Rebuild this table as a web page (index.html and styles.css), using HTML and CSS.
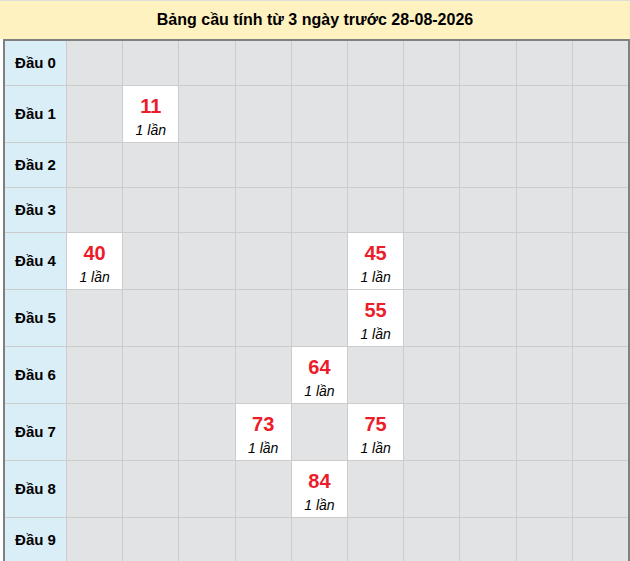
FILE: index.html
```html
<!DOCTYPE html>
<html lang="vi">
<head>
<meta charset="utf-8">
<title>Bảng cầu</title>
<link rel="stylesheet" href="styles.css">
</head>
<body>
<div class="title">Bảng cầu tính từ 3 ngày trước 28-08-2026</div>
<div class="board">
  <div class="head">Đầu 0</div><div class="c"></div><div class="c"></div><div class="c"></div><div class="c"></div><div class="c"></div><div class="c"></div><div class="c"></div><div class="c"></div><div class="c"></div><div class="c"></div>
  <div class="head">Đầu 1</div><div class="c"></div><div class="c hit"><b>11</b><i>1 lần</i></div><div class="c"></div><div class="c"></div><div class="c"></div><div class="c"></div><div class="c"></div><div class="c"></div><div class="c"></div><div class="c"></div>
  <div class="head">Đầu 2</div><div class="c"></div><div class="c"></div><div class="c"></div><div class="c"></div><div class="c"></div><div class="c"></div><div class="c"></div><div class="c"></div><div class="c"></div><div class="c"></div>
  <div class="head">Đầu 3</div><div class="c"></div><div class="c"></div><div class="c"></div><div class="c"></div><div class="c"></div><div class="c"></div><div class="c"></div><div class="c"></div><div class="c"></div><div class="c"></div>
  <div class="head">Đầu 4</div><div class="c hit"><b>40</b><i>1 lần</i></div><div class="c"></div><div class="c"></div><div class="c"></div><div class="c"></div><div class="c hit"><b>45</b><i>1 lần</i></div><div class="c"></div><div class="c"></div><div class="c"></div><div class="c"></div>
  <div class="head">Đầu 5</div><div class="c"></div><div class="c"></div><div class="c"></div><div class="c"></div><div class="c"></div><div class="c hit"><b>55</b><i>1 lần</i></div><div class="c"></div><div class="c"></div><div class="c"></div><div class="c"></div>
  <div class="head">Đầu 6</div><div class="c"></div><div class="c"></div><div class="c"></div><div class="c"></div><div class="c hit"><b>64</b><i>1 lần</i></div><div class="c"></div><div class="c"></div><div class="c"></div><div class="c"></div><div class="c"></div>
  <div class="head">Đầu 7</div><div class="c"></div><div class="c"></div><div class="c"></div><div class="c hit"><b>73</b><i>1 lần</i></div><div class="c"></div><div class="c hit"><b>75</b><i>1 lần</i></div><div class="c"></div><div class="c"></div><div class="c"></div><div class="c"></div>
  <div class="head">Đầu 8</div><div class="c"></div><div class="c"></div><div class="c"></div><div class="c"></div><div class="c hit"><b>84</b><i>1 lần</i></div><div class="c"></div><div class="c"></div><div class="c"></div><div class="c"></div><div class="c"></div>
  <div class="head">Đầu 9</div><div class="c"></div><div class="c"></div><div class="c"></div><div class="c"></div><div class="c"></div><div class="c"></div><div class="c"></div><div class="c"></div><div class="c"></div><div class="c"></div>
</div>
</body>
</html>
```
FILE: styles.css
```css
html, body {
  margin: 0;
  padding: 0;
  background: #ffffff;
  font-family: "Liberation Sans", Arial, sans-serif;
  color: #000;
}
.title {
  border-top: 1px solid #dddddd;
  height: 38px;
  background: #fff2c1;
  display: flex;
  align-items: center;
  justify-content: center;
  font-weight: bold;
  font-size: 16px;
}
.board {
  margin-left: 3px;
  width: 623px;
  border: 2px solid #808080;
  border-bottom: none;
  background: #cccccc;
  display: grid;
  grid-template-columns: 61px repeat(10, 1fr);
  grid-auto-rows: minmax(44px, auto);
  gap: 1px;
}
.head {
  background: #daeef8;
  display: flex;
  align-items: center;
  justify-content: center;
  padding-bottom: 2px;
  font-weight: bold;
  font-size: 15px;
}
.c {
  background: #e2e3e5;
}
.hit {
  background: #ffffff;
  min-height: 56px;
  box-sizing: border-box;
  padding-top: 9px;
  display: flex;
  flex-direction: column;
  align-items: center;
}
.hit b {
  color: #ec1c2a;
  font-size: 20px;
  line-height: 22px;
}
.hit i {
  margin-top: 4px;
  font-size: 14px;
  line-height: 18px;
}
```
